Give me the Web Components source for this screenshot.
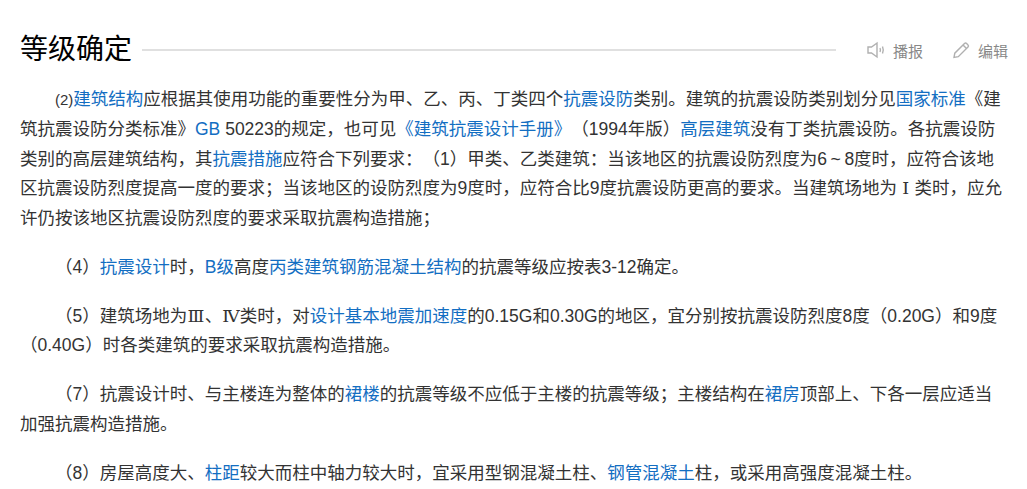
<!DOCTYPE html>
<html lang="zh-CN">
<head>
<meta charset="utf-8">
<style>
  html, body { margin: 0; padding: 0; background: #fff; overflow: hidden; }
  body { font-family: "Liberation Sans", "Noto Sans CJK SC", sans-serif; text-spacing-trim: space-all; }
</style>
</head>
<body>
<wiki-section titulo="等级确定">
  <wiki-para><sup-ref>(2)</sup-ref><a href="#">建筑结构</a>应根据其使用功能的重要性分为甲、乙、丙、丁类四个<a href="#">抗震设防</a>类别。建筑的抗震设防类别划分见<a href="#">国家标准</a>《建筑抗震设防分类标准》<a href="#">GB</a> 50223的规定，也可见<a href="#">《建筑抗震设计手册》</a>（1994年版）<a href="#">高层建筑</a>没有丁类抗震设防。各抗震设防类别的高层建筑结构，其<a href="#">抗震措施</a>应符合下列要求：（1）甲类、乙类建筑：当该地区的抗震设防烈度为6<tilde-mark>~</tilde-mark>8度时，应符合该地区抗震设防烈度提高一度的要求；当该地区的设防烈度为9度时，应符合比9度抗震设防更高的要求。当建筑场地为<roman-num>Ⅰ</roman-num>类时，应允许仍按该地区抗震设防烈度的要求采取抗震构造措施；</wiki-para>
  <wiki-para>（4）<a href="#">抗震设计</a>时，<a href="#">B级</a>高度<a href="#">丙类建筑钢筋混凝土结构</a>的抗震等级应按表3-12确定。</wiki-para>
  <wiki-para>（5）建筑场地为<roman-num>Ⅲ</roman-num>、<roman-num>Ⅳ</roman-num>类时，对<a href="#">设计基本地震加速度</a>的0.15G和0.30G的地区，宜分别按抗震设防烈度8度（0.20G）和9度（0.40G）时各类建筑的要求采取抗震构造措施。</wiki-para>
  <wiki-para>（7）抗震设计时、与主楼连为整体的<a href="#">裙楼</a>的抗震等级不应低于主楼的抗震等级；主楼结构在<a href="#">裙房</a>顶部上、下各一层应适当加强抗震构造措施。</wiki-para>
  <wiki-para>（8）房屋高度大、<a href="#">柱距</a>较大而柱中轴力较大时，宜采用型钢混凝土柱、<a href="#">钢管混凝土</a>柱，或采用高强度混凝土柱。</wiki-para>
</wiki-section>
<script>
class WikiSection extends HTMLElement {
  connectedCallback() {
    const titulo = this.getAttribute("titulo") || "";
    this.attachShadow({ mode: "open" });
    this.shadowRoot.innerHTML = `
      <style>
        :host { display: block; padding: 33px 19px 0 20px; color: #333; }
        .cabecera { display: flex; align-items: center; height: 34px; margin-bottom: 18px; }
        h2 { margin: 0; font-size: 28px; font-weight: 400; line-height: 34px; color: #000; padding-right: 10px; }
        .linea { flex: 1; height: 2px; background: #e0e0e0; }
        .acciones { display: flex; align-items: center; margin-left: 31px; font-size: 15px; color: #888; gap: 29px; }
        .accion { display: flex; align-items: center; gap: 7px; }
        svg { width: 19px; height: 18px; fill: none; stroke: #b0b0b0; stroke-width: 1.4; }
      </style>
      <div class="cabecera">
        <h2>${titulo}</h2>
        <span class="linea"></span>
        <div class="acciones">
          <span class="accion"><svg viewBox="0 0 19 18"><path d="M1 6h3.500L10 2v14l-5.500-4H1z"/><path d="M13 7c.6 1.300.6 2.700 0 4M15.500 5.500c1 2.300 1 4.700 0 7"/></svg>播报</span>
          <span class="accion"><svg viewBox="0 0 19 18"><path d="M2 16.500l.8-4.300L12.500 2.500a1.500 1.500 0 0 1 2.100 0l1.400 1.400a1.500 1.500 0 0 1 0 2.100L6.300 15.700z"/><path d="M11 4l3.500 3.500"/></svg>编辑</span>
        </div>
      </div>
      <slot></slot>
    `;
  }
}
class WikiPara extends HTMLElement {
  connectedCallback() {
    this.attachShadow({ mode: "open" });
    this.shadowRoot.innerHTML = `
      <style>
        :host { display: block; font-size: 17.5px; line-height: 29.75px; text-indent: 2em; margin-bottom: 19px; color: #333; }
        ::slotted(a) { color: #136ec2; text-decoration: none; }
      </style>
      <slot></slot>
    `;
  }
}
class SupRef extends HTMLElement {
  connectedCallback() {
    this.attachShadow({ mode: "open" });
    this.shadowRoot.innerHTML = `<style>:host { display: inline; font-size: 15px; line-height: 0; }</style><slot></slot>`;
  }
}
// numeros romanos con serifa, ancho de un caracter CJK, sin estirar la linea
class RomanNum extends HTMLElement {
  connectedCallback() {
    this.attachShadow({ mode: "open" });
    this.shadowRoot.innerHTML = `<style>:host { display: inline-block; width: 1em; text-align: center; text-indent: 0; font-family: "DejaVu Serif", serif; font-size: 17.5px; line-height: 0; }</style><slot></slot>`;
  }
}
class TildeMark extends HTMLElement {
  connectedCallback() {
    this.attachShadow({ mode: "open" });
    this.shadowRoot.innerHTML = `<style>:host { display: inline; padding: 0 3.6px; }</style><slot></slot>`;
  }
}
customElements.define("wiki-section", WikiSection);
customElements.define("wiki-para", WikiPara);
customElements.define("sup-ref", SupRef);
customElements.define("roman-num", RomanNum);
customElements.define("tilde-mark", TildeMark);
</script>
</body>
</html>
